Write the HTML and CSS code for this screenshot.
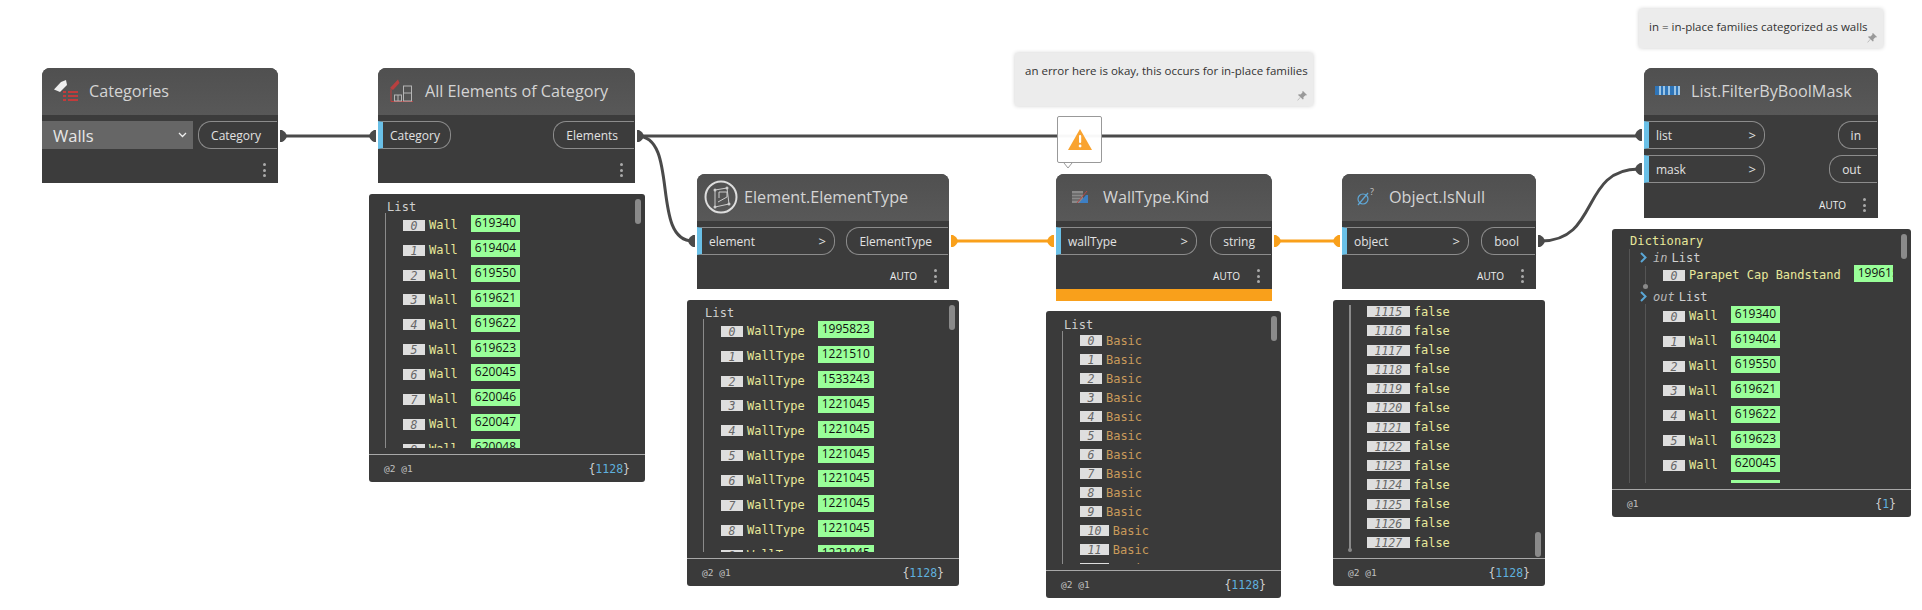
FILE: index.html
```html
<!DOCTYPE html>
<html lang="en">

<head>
    <meta charset="UTF-8">
    <title>Dynamo graph</title>
    <link rel="stylesheet" href="styles.css">
</head>

<body>
    <div class="canvas">
        <svg class="wires" width="1922" height="610">
            <path class="wire" d="M283 136H374" />
            <path class="wire" d="M640 136H1640" />
            <path class="wire" d="M637 136C680 136 650 241 693 241" />
            <path class="wire" d="M1541 241C1600 241 1580 169 1639 169" />
            <path class="wire wire-warn" d="M952 241H1052" />
            <path class="wire wire-warn" d="M1275 241H1338" />
            <path class="cap" d="M280 130h2q4 2 5 6q-1 4-5 6h-2z" />
            <path class="cap" d="M376 130h-2q-4 2-5 6q1 4 5 6h2z" />
            <path class="cap" d="M637 130h2q4 2 5 6q-1 4-5 6h-2z" />
            <path class="cap" d="M695 235h-2q-4 2-5 6q1 4 5 6h2z" />
            <path class="cap cap-warn" d="M951 235h2q4 2 5 6q-1 4-5 6h-2z" />
            <path class="cap cap-warn" d="M1054 235h-2q-4 2-5 6q1 4 5 6h2z" />
            <path class="cap cap-warn" d="M1274 235h2q4 2 5 6q-1 4-5 6h-2z" />
            <path class="cap cap-warn" d="M1340 235h-2q-4 2-5 6q1 4 5 6h2z" />
            <path class="cap" d="M1538 235h2q4 2 5 6q-1 4-5 6h-2z" />
            <path class="cap" d="M1642 129h-2q-4 2-5 6q1 4 5 6h2z" />
            <path class="cap" d="M1642 163h-2q-4 2-5 6q1 4 5 6h2z" />
        </svg>

        <!-- notes -->
        <div class="note note-error">
            an error here is okay, this occurs for in-place families
            <svg class="pin" width="10" height="10" viewBox="0 0 10 10"><path d="M6 0l4 4-1 .6-.6-.3-2 2 .2 1.7-.8.6L3.500 6.300.8 9.500.4 9.200 3.300 6 1 3.900l.8-.7 1.700.2 2-2-.3-.6z" /></svg>
        </div>
        <div class="note note-in">
            in = in-place families categorized as walls
            <svg class="pin" width="10" height="10" viewBox="0 0 10 10"><path d="M6 0l4 4-1 .6-.6-.3-2 2 .2 1.700-.8.6L3.500 6.300.8 9.500.4 9.200 3.300 6 1 3.900l.8-.7 1.700.2 2-2-.3-.6z" /></svg>
        </div>

        <!-- warning bubble -->
        <div class="warning">
            <svg width="24" height="21" viewBox="0 0 24 21">
                <path d="M12 0L24 21H0z" fill="#f9a330" />
                <rect x="11" y="6" width="2.200" height="8" rx="1" fill="#fff" />
                <circle cx="12.100" cy="17" r="1.400" fill="#fff" />
            </svg>
            <svg class="warning-tip" width="10" height="6" viewBox="0 0 10 6"><path d="M1 0l4 5 4-5" /></svg>
        </div>

        <!-- Categories -->
        <div class="node node-categories">
            <div class="node-head">
                <span class="node-icon">
                    <svg width="24" height="22" viewBox="0 0 24 22">
                        <path d="M0 9.500L7 2l5-2 1 5-7 7z" fill="#eee" />
                        <g fill="#c23b3b">
                            <rect x="9" y="11" width="3" height="2" />
                            <rect x="14" y="11" width="10" height="2" />
                            <rect x="9" y="15" width="3" height="2" />
                            <rect x="14" y="15" width="10" height="2" />
                            <rect x="9" y="19" width="3" height="2" />
                            <rect x="14" y="19" width="10" height="2" />
                        </g>
                    </svg>
                </span>
                Categories
            </div>
            <div class="node-body">
                <div class="dropdown">
                    Walls
                    <svg width="9" height="6" viewBox="0 0 9 6"><path d="M1 1l3.500 3.500L8 1" /></svg>
                </div>
                <div class="ports-out">
                    <div class="port port-out">Category</div>
                </div>
            </div>
            <div class="node-foot">
                <span class="dots"><i></i><i></i><i></i></span>
            </div>
        </div>

        <!-- All Elements of Category -->
        <div class="node node-elements">
            <div class="node-head">
                <span class="node-icon">
                    <svg width="23" height="23" viewBox="0 0 23 23">
                        <path d="M0 9L8 .5l1.500 3.500L3 11z" fill="#b84040" />
                        <path d="M1 10v12.500h22" fill="none" stroke="#b84040" />
                        <g fill="none" stroke="#b5b5b5">
                            <rect x="4.500" y="16" width="7" height="6" />
                            <path d="M8 16v6" />
                            <rect x="13.500" y="7" width="8" height="15" />
                            <path d="M13.500 14h8" />
                        </g>
                    </svg>
                </span>
                All Elements of Category
            </div>
            <div class="node-body">
                <div class="ports-in">
                    <div class="port port-in">Category</div>
                </div>
                <div class="ports-out">
                    <div class="port port-out">Elements</div>
                </div>
            </div>
            <div class="node-foot">
                <span class="dots"><i></i><i></i><i></i></span>
            </div>
        </div>

        <!-- Element.ElementType -->
        <div class="node node-type">
            <div class="node-head">
                <span class="node-icon">
                    <svg width="34" height="34" viewBox="0 0 34 34">
                        <circle cx="17" cy="17" r="15.500" fill="none" stroke="#ddd" stroke-width="2" />
                        <g fill="none" stroke="#ccc">
                            <path d="M11 10l12-2 2 16-14 3z" />
                            <path d="M15 12h8v5l-9 5M15 12v6" />
                        </g>
                        <g fill="#ccc">
                            <circle cx="11" cy="10" r="1.500" />
                            <circle cx="23" cy="8" r="1.500" />
                            <circle cx="25" cy="24" r="1.500" />
                            <circle cx="11" cy="27" r="1.500" />
                        </g>
                    </svg>
                </span>
                Element.ElementType
            </div>
            <div class="node-body">
                <div class="ports-in">
                    <div class="port port-in">element<b>&gt;</b></div>
                </div>
                <div class="ports-out">
                    <div class="port port-out">ElementType</div>
                </div>
            </div>
            <div class="node-foot">
                <span class="auto">AUTO</span>
                <span class="dots"><i></i><i></i><i></i></span>
            </div>
        </div>

        <!-- WallType.Kind -->
        <div class="node node-kind">
            <div class="node-head">
                <span class="node-icon">
                    <svg width="16" height="12" viewBox="0 0 16 12">
                        <rect width="11" height="12" fill="#8a8a8a" />
                        <path d="M0 3h11M0 6h9M0 9h8" stroke="#555" />
                        <path d="M7 12L14 4h2v8z" fill="#3d7fc4" />
                        <path d="M5 12L15 0" stroke="#b84a4a" />
                    </svg>
                </span>
                WallType.Kind
            </div>
            <div class="node-body">
                <div class="ports-in">
                    <div class="port port-in">wallType<b>&gt;</b></div>
                </div>
                <div class="ports-out">
                    <div class="port port-out">string</div>
                </div>
            </div>
            <div class="node-foot">
                <span class="auto">AUTO</span>
                <span class="dots"><i></i><i></i><i></i></span>
            </div>
        </div>

        <!-- Object.IsNull -->
        <div class="node node-null">
            <div class="node-head">
                <span class="node-icon">
                    <svg width="20" height="20" viewBox="0 0 20 20">
                        <g fill="none" stroke="#5fa8d8" stroke-width="1.200">
                            <circle cx="7" cy="12" r="5" />
                            <path d="M2 18L12 6" />
                        </g>
                        <text x="14" y="8" class="icon-mark">?</text>
                    </svg>
                </span>
                Object.IsNull
            </div>
            <div class="node-body">
                <div class="ports-in">
                    <div class="port port-in">object<b>&gt;</b></div>
                </div>
                <div class="ports-out">
                    <div class="port port-out">bool</div>
                </div>
            </div>
            <div class="node-foot">
                <span class="auto">AUTO</span>
                <span class="dots"><i></i><i></i><i></i></span>
            </div>
        </div>

        <!-- List.FilterByBoolMask -->
        <div class="node node-filter">
            <div class="node-head">
                <span class="node-icon">
                    <svg width="25" height="9" viewBox="0 0 25 9">
                        <rect width="25" height="9" fill="#9cc4e4" />
                        <g fill="#2f75b8">
                            <rect width="4" height="9" />
                            <rect x="6" width="2" height="9" />
                            <rect x="10" width="3" height="9" />
                            <rect x="15" width="4" height="9" />
                            <rect x="21" width="2" height="9" />
                        </g>
                    </svg>
                </span>
                List.FilterByBoolMask
            </div>
            <div class="node-body">
                <div class="ports-in">
                    <div class="port port-in">list<b>&gt;</b></div>
                    <div class="port port-in">mask<b>&gt;</b></div>
                </div>
                <div class="ports-out">
                    <div class="port port-out">in</div>
                    <div class="port port-out">out</div>
                </div>
            </div>
            <div class="node-foot">
                <span class="auto">AUTO</span>
                <span class="dots"><i></i><i></i><i></i></span>
            </div>
        </div>

        <!-- preview: elements -->
        <div class="preview preview-elements">
            <div class="tree">
                <div class="tree-label">List</div>
                <div class="rows">
                    <div class="row"><span class="idx">0</span><span class="val">Wall</span><span class="num">619340</span></div>
                    <div class="row"><span class="idx">1</span><span class="val">Wall</span><span class="num">619404</span></div>
                    <div class="row"><span class="idx">2</span><span class="val">Wall</span><span class="num">619550</span></div>
                    <div class="row"><span class="idx">3</span><span class="val">Wall</span><span class="num">619621</span></div>
                    <div class="row"><span class="idx">4</span><span class="val">Wall</span><span class="num">619622</span></div>
                    <div class="row"><span class="idx">5</span><span class="val">Wall</span><span class="num">619623</span></div>
                    <div class="row"><span class="idx">6</span><span class="val">Wall</span><span class="num">620045</span></div>
                    <div class="row"><span class="idx">7</span><span class="val">Wall</span><span class="num">620046</span></div>
                    <div class="row"><span class="idx">8</span><span class="val">Wall</span><span class="num">620047</span></div>
                    <div class="row"><span class="idx">9</span><span class="val">Wall</span><span class="num">620048</span></div>
                </div>
            </div>
            <div class="preview-foot"><span class="levels">@2 @1</span><span class="count">{<em>1128</em>}</span></div>
            <span class="thumb"></span>
        </div>

        <!-- preview: element types -->
        <div class="preview preview-type">
            <div class="tree">
                <div class="tree-label">List</div>
                <div class="rows">
                    <div class="row"><span class="idx">0</span><span class="val">WallType</span><span class="num">1995823</span></div>
                    <div class="row"><span class="idx">1</span><span class="val">WallType</span><span class="num">1221510</span></div>
                    <div class="row"><span class="idx">2</span><span class="val">WallType</span><span class="num">1533243</span></div>
                    <div class="row"><span class="idx">3</span><span class="val">WallType</span><span class="num">1221045</span></div>
                    <div class="row"><span class="idx">4</span><span class="val">WallType</span><span class="num">1221045</span></div>
                    <div class="row"><span class="idx">5</span><span class="val">WallType</span><span class="num">1221045</span></div>
                    <div class="row"><span class="idx">6</span><span class="val">WallType</span><span class="num">1221045</span></div>
                    <div class="row"><span class="idx">7</span><span class="val">WallType</span><span class="num">1221045</span></div>
                    <div class="row"><span class="idx">8</span><span class="val">WallType</span><span class="num">1221045</span></div>
                    <div class="row"><span class="idx">9</span><span class="val">WallType</span><span class="num">1221045</span></div>
                </div>
            </div>
            <div class="preview-foot"><span class="levels">@2 @1</span><span class="count">{<em>1128</em>}</span></div>
            <span class="thumb"></span>
        </div>

        <!-- preview: kinds -->
        <div class="preview preview-kind">
            <div class="tree tree-compact">
                <div class="tree-label">List</div>
                <div class="rows">
                    <div class="row"><span class="idx">0</span><span class="val val-text">Basic</span></div>
                    <div class="row"><span class="idx">1</span><span class="val val-text">Basic</span></div>
                    <div class="row"><span class="idx">2</span><span class="val val-text">Basic</span></div>
                    <div class="row"><span class="idx">3</span><span class="val val-text">Basic</span></div>
                    <div class="row"><span class="idx">4</span><span class="val val-text">Basic</span></div>
                    <div class="row"><span class="idx">5</span><span class="val val-text">Basic</span></div>
                    <div class="row"><span class="idx">6</span><span class="val val-text">Basic</span></div>
                    <div class="row"><span class="idx">7</span><span class="val val-text">Basic</span></div>
                    <div class="row"><span class="idx">8</span><span class="val val-text">Basic</span></div>
                    <div class="row"><span class="idx">9</span><span class="val val-text">Basic</span></div>
                    <div class="row"><span class="idx">10</span><span class="val val-text">Basic</span></div>
                    <div class="row"><span class="idx">11</span><span class="val val-text">Basic</span></div>
                    <div class="row"><span class="idx">12</span><span class="val val-text">Basic</span></div>
                </div>
            </div>
            <div class="preview-foot"><span class="levels">@2 @1</span><span class="count">{<em>1128</em>}</span></div>
            <span class="thumb"></span>
        </div>

        <!-- preview: bools, scrolled to the end -->
        <div class="preview preview-null">
            <div class="tree tree-end">
                <div class="rows">
                    <div class="row"><span class="idx">1115</span><span class="val">false</span></div>
                    <div class="row"><span class="idx">1116</span><span class="val">false</span></div>
                    <div class="row"><span class="idx">1117</span><span class="val">false</span></div>
                    <div class="row"><span class="idx">1118</span><span class="val">false</span></div>
                    <div class="row"><span class="idx">1119</span><span class="val">false</span></div>
                    <div class="row"><span class="idx">1120</span><span class="val">false</span></div>
                    <div class="row"><span class="idx">1121</span><span class="val">false</span></div>
                    <div class="row"><span class="idx">1122</span><span class="val">false</span></div>
                    <div class="row"><span class="idx">1123</span><span class="val">false</span></div>
                    <div class="row"><span class="idx">1124</span><span class="val">false</span></div>
                    <div class="row"><span class="idx">1125</span><span class="val">false</span></div>
                    <div class="row"><span class="idx">1126</span><span class="val">false</span></div>
                    <div class="row"><span class="idx">1127</span><span class="val">false</span></div>
                </div>
            </div>
            <div class="preview-foot"><span class="levels">@2 @1</span><span class="count">{<em>1128</em>}</span></div>
            <span class="thumb"></span>
        </div>

        <!-- preview: dictionary -->
        <div class="preview preview-filter">
            <div class="tree">
                <div class="tree-label tree-label-dict">Dictionary</div>
                <div class="dict">
                    <div class="dict-head">
                        <svg width="7" height="11" viewBox="0 0 7 11"><path d="M1 1l4.500 4.500L1 10" /></svg>
                        <em>in</em><span>List</span>
                    </div>
                    <div class="dict-rows dict-rows-in">
                        <div class="row"><span class="idx">0</span><span class="val">Parapet Cap Bandstand</span><span class="num num-cut">199615</span></div>
                    </div>
                    <div class="dict-head">
                        <svg width="7" height="11" viewBox="0 0 7 11"><path d="M1 1l4.500 4.500L1 10" /></svg>
                        <em>out</em><span>List</span>
                    </div>
                    <div class="dict-rows">
                        <div class="row"><span class="idx">0</span><span class="val">Wall</span><span class="num">619340</span></div>
                        <div class="row"><span class="idx">1</span><span class="val">Wall</span><span class="num">619404</span></div>
                        <div class="row"><span class="idx">2</span><span class="val">Wall</span><span class="num">619550</span></div>
                        <div class="row"><span class="idx">3</span><span class="val">Wall</span><span class="num">619621</span></div>
                        <div class="row"><span class="idx">4</span><span class="val">Wall</span><span class="num">619622</span></div>
                        <div class="row"><span class="idx">5</span><span class="val">Wall</span><span class="num">619623</span></div>
                        <div class="row"><span class="idx">6</span><span class="val">Wall</span><span class="num">620045</span></div>
                        <div class="row"><span class="idx">7</span><span class="val">Wall</span><span class="num">620046</span></div>
                    </div>
                </div>
            </div>
            <div class="preview-foot"><span class="levels">@1</span><span class="count">{<em>1</em>}</span></div>
            <span class="thumb"></span>
        </div>
    </div>
</body>

</html>
```

FILE: styles.css
```css
body {
    margin: 0;
    background-color: #fff;
    font-family: "Open Sans", sans-serif;
}

.canvas {
    position: relative;
    width: 1922px;
    height: 610px;
    overflow: hidden;
}

/* wires */
.wires {
    position: absolute;
    left: 0;
    top: 0;
}

.wire {
    fill: none;
    stroke: #4a4a4a;
    stroke-width: 3;
}

.wire-warn {
    stroke: #f9a01b;
}

.cap {
    fill: #4a4a4a;
}

.cap-warn {
    fill: #f9a01b;
}

/* nodes */
.node {
    position: absolute;
    display: flex;
    flex-direction: column;
    background-color: #3c3c3c;
    border-radius: 8px 8px 0 0;
    box-sizing: border-box;
}

.node-categories { left: 42px; top: 68px; width: 236px; height: 115px; }
.node-elements { left: 378px; top: 68px; width: 257px; height: 115px; }
.node-type { left: 697px; top: 174px; width: 252px; height: 115px; }
.node-kind { left: 1056px; top: 174px; width: 216px; height: 127px; border-bottom: 12px solid #f9a01b; }
.node-null { left: 1342px; top: 174px; width: 194px; height: 115px; }
.node-filter { left: 1644px; top: 68px; width: 234px; height: 150px; }

.node-head {
    display: flex;
    align-items: center;
    height: 47px;
    box-sizing: border-box;
    padding-bottom: 2px;
    flex-shrink: 0;
    background: linear-gradient(#505050, #585858);
    border-radius: 8px 8px 0 0;
    color: #d4d4d4;
    font-size: 16.200px;
}

.node-icon {
    display: flex;
    justify-content: center;
    align-items: center;
    width: 47px;
    flex-shrink: 0;
}

.icon-mark {
    fill: #c8c8c8;
    font-size: 9px;
    font-family: "Open Sans", sans-serif;
}

.node-body {
    display: flex;
    justify-content: space-between;
    align-items: flex-start;
    padding-top: 6px;
    flex: 1;
}

.ports-in,
.ports-out {
    display: flex;
    flex-direction: column;
    gap: 6px;
}

.ports-out {
    align-items: flex-end;
    margin-right: 1px;
}

.port {
    display: flex;
    align-items: center;
    height: 28px;
    box-sizing: border-box;
    border: 1px solid #8c8c8c;
    color: #e2e2e2;
    font-size: 12px;
}

.port-in {
    justify-content: space-between;
    border-left: 5px solid #6ac0e7;
    border-radius: 0 13px 13px 0;
    padding: 0 8px 0 7px;
}

.port-in b {
    font-weight: 400;
    font-size: 13px;
}

.port-out {
    border-right: none;
    border-radius: 13px 0 0 13px;
    padding: 0 16px 0 12px;
}

.node-elements .port-in { width: 73px; }
.node-type .port-in { width: 138px; }
.node-kind .port-in { width: 141px; }
.node-null .port-in { width: 127px; }
.node-filter .port-in { width: 121px; }

.dropdown {
    display: flex;
    justify-content: space-between;
    align-items: center;
    width: 151px;
    height: 28px;
    box-sizing: border-box;
    padding: 0 6px 0 11px;
    background-color: #666;
    color: #e6e6e6;
    font-size: 16.500px;
}

.dropdown svg path {
    fill: none;
    stroke: #eee;
    stroke-width: 1.300;
}

.node-foot {
    display: flex;
    justify-content: flex-end;
    align-items: center;
    gap: 17px;
    height: 26px;
    padding-right: 12px;
    flex-shrink: 0;
}

.auto {
    color: #eee;
    font-size: 10px;
}

.dots {
    display: flex;
    flex-direction: column;
    gap: 2.500px;
}

.dots i {
    display: block;
    width: 3px;
    height: 3px;
    border-radius: 50%;
    background-color: #aaa;
}

/* notes */
.note {
    position: absolute;
    box-sizing: border-box;
    padding: 10px;
    background-color: #ececec;
    border-radius: 2px;
    box-shadow: 0 0 4px rgba(0, 0, 0, 0.2);
    color: #333;
    font-size: 11.500px;
    line-height: 16px;
    white-space: nowrap;
}

.note-error { left: 1015px; top: 53px; width: 298px; height: 53px; }
.note-in { left: 1639px; top: 9px; width: 244px; height: 39px; }

.pin {
    position: absolute;
    right: 6px;
    bottom: 5px;
    fill: #999;
}

.warning {
    position: absolute;
    left: 1057px;
    top: 116px;
    display: flex;
    justify-content: center;
    align-items: center;
    width: 45px;
    height: 47px;
    box-sizing: border-box;
    background-color: rgba(255, 255, 255, 0.96);
    border: 1px solid #999;
    border-radius: 2px;
}

.warning-tip {
    position: absolute;
    left: 5px;
    bottom: -7px;
    fill: #fff;
    stroke: #999;
}

/* watch previews */
.preview {
    position: absolute;
    display: flex;
    flex-direction: column;
    box-sizing: border-box;
    background-color: #3a3a3a;
    border-radius: 3px;
    color: #d8d8d8;
    font-family: "DejaVu Sans Mono", monospace;
    font-size: 12px;
}

.preview-elements { left: 369px; top: 194px; width: 276px; height: 288px; }
.preview-type { left: 687px; top: 300px; width: 272px; height: 286px; }
.preview-kind { left: 1046px; top: 311px; width: 235px; height: 287px; }
.preview-null { left: 1333px; top: 300px; width: 212px; height: 286px; }
.preview-filter { left: 1612px; top: 229px; width: 299px; height: 288px; }

.tree {
    flex: 1;
    min-height: 0;
    padding-top: 5px;
    margin-bottom: 6px;
    overflow: hidden;
}

.tree-label {
    height: 14px;
    line-height: 16px;
    margin-left: 18px;
    color: #d0d0d0;
    letter-spacing: 0.100px;
}

.tree-label-dict {
    height: 15px;
    line-height: 15px;
    color: #e8e89a;
}

.rows {
    margin-left: 16px;
    padding-left: 17px;
    border-left: 1.500px solid #8a8a8a;
    min-height: 100%;
}

.row {
    display: flex;
    align-items: center;
    height: 24.850px;
    white-space: nowrap;
}

.tree-compact {
    padding-top: 7px;
}

.tree-compact .tree-label {
    height: 13px;
    line-height: 14px;
}

.tree-compact .row {
    height: 19px;
}

.tree-end {
    position: relative;
    padding-top: 2px;
}

.tree-end .rows {
    border-left: none;
    padding-left: 18px;
    min-height: 0;
}

.tree-end .row {
    height: 19.250px;
}

/* tail of the list: the line and its end dot */
.tree-end::before {
    content: "";
    position: absolute;
    left: 16px;
    top: 5px;
    bottom: 2px;
    width: 1.500px;
    background-color: #8a8a8a;
}

.tree-end::after {
    content: "";
    position: absolute;
    left: 15px;
    bottom: 0;
    width: 4px;
    height: 4px;
    border-radius: 50%;
    background-color: #8a8a8a;
}

.idx {
    height: 11px;
    line-height: 12px;
    padding: 0 7.500px;
    margin-right: 4px;
    background-color: #dedede;
    color: #666;
    font-size: 11.500px;
    font-style: italic;
}

.val {
    color: #e8e89a;
}

.val-text {
    color: #c99a5b;
}

.num {
    height: 17px;
    line-height: 15px;
    margin: 0 0 3px 13px;
    padding: 0 4px;
    background-color: #99ff99;
    color: #111;
    font-family: "Open Sans", sans-serif;
    font-size: 12px;
}

.num-cut {
    width: 35px;
    overflow: hidden;
    padding-right: 0;
}

.dict {
    margin-left: 17px;
    border-left: 1px solid #555;
    min-height: 100%;
    position: relative;
}

.dict-head {
    display: flex;
    align-items: center;
    height: 17px;
    padding-left: 10px;
    color: #d0d0d0;
}

.dict-head svg {
    fill: none;
    stroke: #5aa7d6;
    stroke-width: 2;
    margin-right: 6px;
}

.dict-head em {
    margin-right: 4px;
    color: #bbb;
}

.dict-rows {
    margin: -1px 0 0 15px;
    padding-left: 17px;
    border-left: 1px solid #555;
}

.dict-rows-in {
    margin-top: 0;
    height: 18px;
    padding-bottom: 4px;
    position: relative;
}

.dict-rows-in .row {
    height: 18px;
}

.dict-rows-in::after {
    content: "";
    position: absolute;
    left: -3px;
    bottom: -1px;
    width: 5px;
    height: 5px;
    border-radius: 50%;
    background-color: #8a8a8a;
}

.preview-foot {
    display: flex;
    justify-content: space-between;
    align-items: center;
    height: 28px;
    box-sizing: border-box;
    flex-shrink: 0;
    padding: 0 15px;
    border-top: 1px solid #a8a8a8;
}

.levels {
    color: #c0c0c0;
    font-size: 9.500px;
}

.count {
    color: #cfcfcf;
    font-size: 11.500px;
}

.count em {
    font-style: normal;
    color: #5fb0de;
}

.thumb {
    position: absolute;
    right: 4px;
    top: 5px;
    width: 6px;
    height: 25px;
    border-radius: 3px;
    background-color: #8a8a8a;
}

.preview-null .thumb {
    top: 232px;
}
```
